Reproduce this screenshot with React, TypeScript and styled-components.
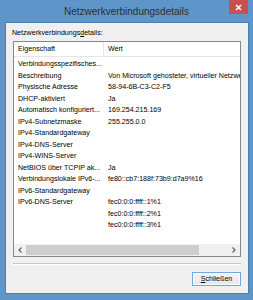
import styled, { createGlobalStyle } from "styled-components";

type Row = { name: string; value?: string };

const rows: Row[] = [
  { name: "Verbindungsspezifisches..." },
  { name: "Beschreibung", value: "Von Microsoft gehosteter, virtueller Netzwerkadapter" },
  { name: "Physische Adresse", value: "58-94-6B-C3-C2-F5" },
  { name: "DHCP-aktiviert", value: "Ja" },
  { name: "Automatisch konfiguriert...", value: "169.254.215.169" },
  { name: "IPv4-Subnetzmaske", value: "255.255.0.0" },
  { name: "IPv4-Standardgateway" },
  { name: "IPv4-DNS-Server" },
  { name: "IPv4-WINS-Server" },
  { name: "NetBIOS über TCPIP ak...", value: "Ja" },
  { name: "Verbindungslokale IPv6-...", value: "fe80::cb7:188f:73b9:d7a9%16" },
  { name: "IPv6-Standardgateway" },
  { name: "IPv6-DNS-Server", value: "fec0:0:0:ffff::1%1" },
  { name: "", value: "fec0:0:0:ffff::2%1" },
  { name: "", value: "fec0:0:0:ffff::3%1" },
];

const GlobalStyle = createGlobalStyle`
  body {
    margin: 0;
    background: #ffffff;
    font-family: "Liberation Sans", Arial, sans-serif;
  }
`;

const Window = styled.div`
  width: 253px;
  height: 300px;
  box-sizing: border-box;
  background: #5e96c9;
  display: flex;
  flex-direction: column;
  padding: 0 4px 6px 5px;
`;

const TitleBar = styled.div`
  height: 22px;
  display: grid;
  grid-template-columns: 1fr auto 1fr;
  align-items: start;
  margin-left: -5px;
  margin-right: -4px;
`;

const Title = styled.div`
  grid-column: 2;
  font-size: 10px;
  line-height: 24px;
  color: #2e2e2e;
`;

const Close = styled.div`
  grid-column: 3;
  justify-self: end;
  width: 19px;
  height: 14px;
  margin-right: 5px;
  background: #c75050;
  display: flex;
  align-items: center;
  justify-content: center;
`;

const Client = styled.div`
  flex: 1;
  background: #f0f0f0;
  border: 1px solid #4a7fb3;
  display: flex;
  flex-direction: column;
  padding: 5px 7px 0 7px;
  font-size: 7.1px;
  color: #000;
`;

const Caption = styled.div`
  line-height: 10px;
  margin-left: -1px;
  u {
    text-decoration: underline;
  }
`;

const ListBox = styled.div`
  margin-top: 3px;
  height: 216px;
  box-sizing: border-box;
  border: 1px solid #828790;
  background: #fff;
  display: flex;
  flex-direction: column;
  overflow: hidden;
`;

const Header = styled.div`
  height: 14px;
  display: grid;
  grid-template-columns: 90px 1fr;
  border-bottom: 1px solid #e5e5e5;
  flex-shrink: 0;
`;

const HeadCell = styled.div<{ $first?: boolean }>`
  padding-left: 4px;
  line-height: 14px;
  border-right: ${(p) => (p.$first ? "1px solid #e5e5e5" : "none")};
`;

const Body = styled.div`
  flex: 1;
  padding-top: 2px;
`;

const Line = styled.div`
  height: 11.5px;
  line-height: 11.5px;
  display: grid;
  grid-template-columns: 90px 1fr;
  white-space: nowrap;
`;

const Cell = styled.div`
  padding-left: 4px;
  overflow: visible;
`;

const Scrollbar = styled.div`
  height: 12px;
  flex-shrink: 0;
  background: #f0f0f0;
  display: flex;
  align-items: center;
`;

const Arrow = styled.div`
  width: 12px;
  height: 12px;
  display: flex;
  align-items: center;
  justify-content: center;
`;

const Track = styled.div`
  flex: 1;
  height: 100%;
  display: flex;
  align-items: center;
`;

const Thumb = styled.div`
  width: 173px;
  height: 10px;
  background: #cdcdcd;
`;

const Separator = styled.div`
  margin-top: 6px;
  height: 1px;
  background: #c8c8c8;
  border-bottom: 1px solid #ffffff;
`;

const Footer = styled.div`
  display: flex;
  justify-content: flex-end;
  margin-top: 7px;
`;

const Button = styled.button`
  width: 49px;
  height: 14px;
  padding: 0;
  box-sizing: border-box;
  border: 1px solid #6fa7de;
  background: linear-gradient(#f3f3f3, #e8e8e8);
  box-shadow: inset 0 0 0 1px #f8fbfe;
  font-family: "Liberation Sans", Arial, sans-serif;
  font-size: 7.1px;
  color: #000;
  line-height: 12px;
`;

function App() {
  return (
    <>
      <GlobalStyle />
      <Window>
        <TitleBar>
          <Title>Netzwerkverbindungsdetails</Title>
          <Close>
            <svg width="7" height="7" viewBox="0 0 7 7">
              <path d="M1 1 L6 6 M6 1 L1 6" stroke="#fff" strokeWidth="1.5" />
            </svg>
          </Close>
        </TitleBar>
        <Client>
          <Caption>
            Netzwerkverbindungs<u>d</u>etails:
          </Caption>
          <ListBox>
            <Header>
              <HeadCell $first>Eigenschaft</HeadCell>
              <HeadCell>Wert</HeadCell>
            </Header>
            <Body>
              {rows.map((r, i) => (
                <Line key={i}>
                  <Cell>{r.name}</Cell>
                  <Cell>{r.value ?? ""}</Cell>
                </Line>
              ))}
            </Body>
            <Scrollbar>
              <Arrow>
                <svg width="4" height="6" viewBox="0 0 4 6">
                  <path d="M3.5 0.5 L1 3 L3.5 5.5" fill="none" stroke="#606060" strokeWidth="1.2" />
                </svg>
              </Arrow>
              <Track>
                <Thumb />
              </Track>
              <Arrow>
                <svg width="4" height="6" viewBox="0 0 4 6">
                  <path d="M0.5 0.5 L3 3 L0.5 5.5" fill="none" stroke="#606060" strokeWidth="1.2" />
                </svg>
              </Arrow>
            </Scrollbar>
          </ListBox>
          <Separator />
          <Footer>
            <Button>
              <u>S</u>chließen
            </Button>
          </Footer>
        </Client>
      </Window>
    </>
  );
}

export default App;
